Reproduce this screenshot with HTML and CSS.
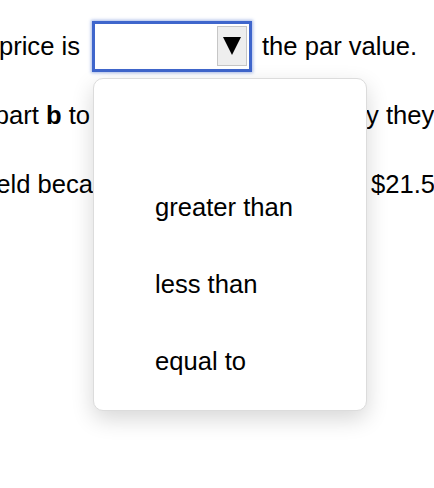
FILE: index.html
```html
<!DOCTYPE html>
<html lang="en">
<head>
    <meta charset="UTF-8" />
    <title>Bond price question</title>
    <link rel="stylesheet" href="styles.css">
</head>
<body>
    <div class="question">
        <div class="line">
            <span class="lead lead-1"><span>The bond's market price is</span></span>
            <div class="select">
                <span class="select-btn">
                    <svg width="18" height="18" viewBox="0 0 18 18"><polygon points="0,0 18,0 9,18" fill="#000"/></svg>
                </span>
            </div>
            <span class="after">the par value.</span>
        </div>
        <div class="line">
            <span class="lead lead-2"><span>Use your answer from part <b>b</b> to</span></span>
            <span class="middle middle-2">explain wh</span>
            <span class="tail">y they differ.</span>
        </div>
        <div class="line">
            <span class="lead lead-3"><span>the current yield beca</span></span>
            <span class="middle middle-3">use the price of</span>
            <span class="tail">$21.50 is lower.</span>
        </div>

        <!-- open dropdown list -->
        <div class="dropdown">
            <div class="option"></div>
            <div class="option">greater than</div>
            <div class="option">less than</div>
            <div class="option">equal to</div>
        </div>
    </div>
</body>
</html>
```

FILE: styles.css
```css
html, body {
    margin: 0;
    height: 100%;
    overflow: hidden;
    background: #fff;
}
body {
    font-family: "Liberation Sans", Arial, sans-serif;
    font-size: 25.6px;
    color: #000;
}
.question {
    position: relative;
    padding-top: 12px;
}
.line {
    display: flex;
    align-items: center;
    height: 69px;
    line-height: 69px;
    white-space: nowrap;
}
.lead {
    display: flex;
    justify-content: flex-end;
    flex: none;
    overflow: hidden;
}
.lead > span {
    flex: none;
}
.lead-1 { width: 80px; }
.lead-2 { width: 90px; }
.lead-3 { width: 93px; }
.middle {
    flex: none;
    overflow: hidden;
    padding-left: 7px;
    box-sizing: border-box;
}
.middle-2 { width: 276px; }
.middle-3 { width: 278px; }
.tail {
    flex: none;
}
.select {
    flex: none;
    margin-left: 12px;
    width: 160px;
    height: 51px;
    box-sizing: border-box;
    border: 3px solid #3f66cc;
    box-shadow: 0 0 3px 1px rgba(63, 102, 204, 0.45);
    background: #fff;
    display: flex;
    justify-content: flex-end;
    align-items: flex-start;
    padding: 2px 2px 0 0;
}
.select-btn {
    width: 30px;
    height: 40px;
    box-sizing: border-box;
    background: #eeeeee;
    border: 1px solid #c6c6c6;
    display: flex;
    align-items: center;
    justify-content: center;
}
.select-btn svg {
    display: block;
}
.after {
    margin-left: 10px;
}
.dropdown {
    position: absolute;
    left: 93px;
    top: 78px;
    width: 274px;
    height: 333px;
    box-sizing: border-box;
    padding: 13px 0 10px;
    background: #fff;
    border: 1px solid #dcdcdc;
    border-radius: 10px;
    box-shadow: 0 8px 22px rgba(0, 0, 0, 0.16);
}
.option {
    height: 77px;
    line-height: 77px;
    padding-left: 61px;
    white-space: nowrap;
}
```
